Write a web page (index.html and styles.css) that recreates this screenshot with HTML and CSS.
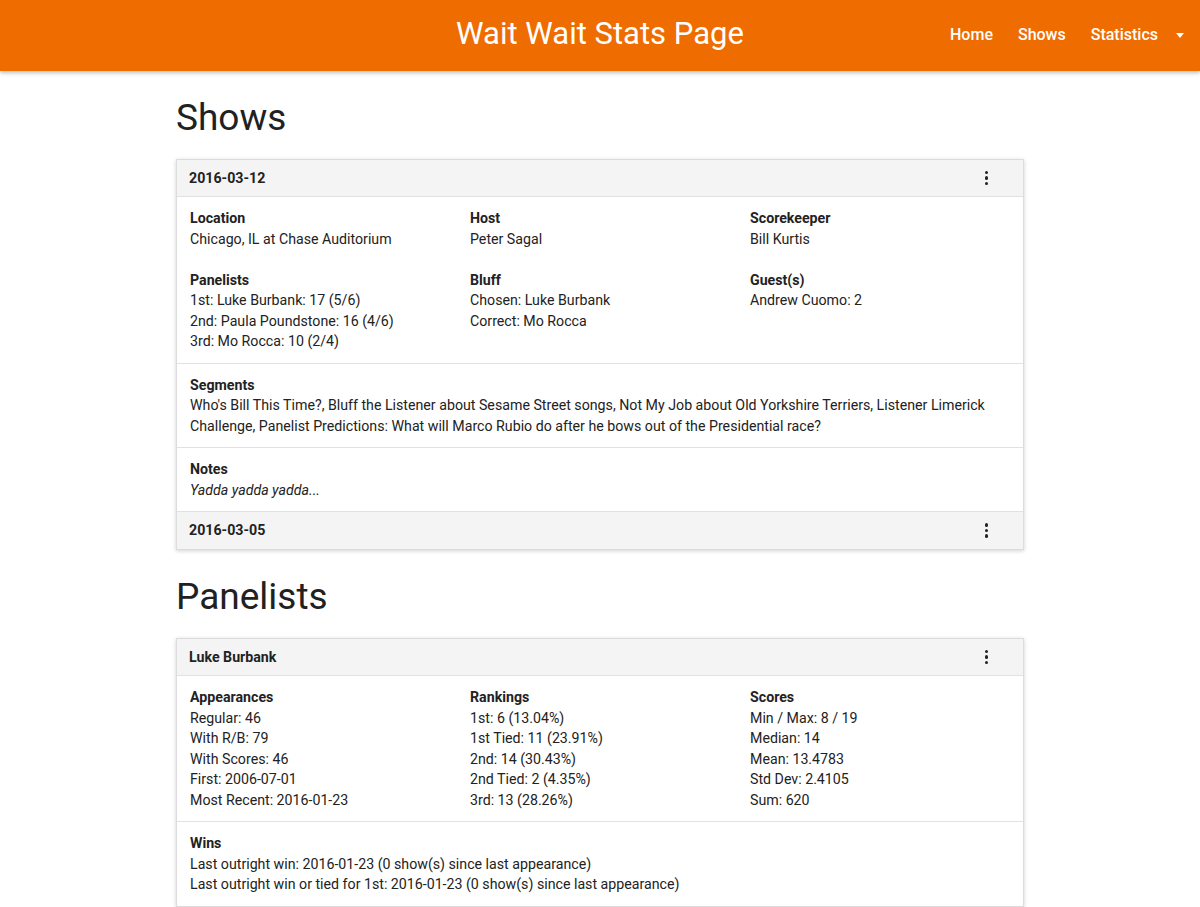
FILE: index.html
```html
<!DOCTYPE html>
<html lang="en">
<head>
<meta charset="utf-8">
<title>Wait Wait Stats Page</title>
<link rel="stylesheet" href="styles.css">
</head>
<body>
<header class="topbar">
  <div class="topbar-spacer"></div>
  <div class="topbar-title">Wait Wait Stats Page</div>
  <nav class="topbar-nav">
    <a class="nav-link" href="#">Home</a>
    <a class="nav-link" href="#">Shows</a>
    <a class="nav-link nav-drop" href="#">Statistics <span class="caret"></span></a>
  </nav>
</header>

<main class="container">
  <h1 class="page-heading">Shows</h1>
  <section class="card">
    <div class="card-head">
      <span class="card-title">2016-03-12</span>
      <span class="kebab"><i></i><i></i><i></i></span>
    </div>
    <div class="card-section grid3">
      <div class="field"><div class="label">Location</div><div>Chicago, IL at Chase Auditorium</div></div>
      <div class="field"><div class="label">Host</div><div>Peter Sagal</div></div>
      <div class="field"><div class="label">Scorekeeper</div><div>Bill Kurtis</div></div>
      <div class="field"><div class="label">Panelists</div><div>1st: Luke Burbank: 17 (5/6)</div><div>2nd: Paula Poundstone: 16 (4/6)</div><div>3rd: Mo Rocca: 10 (2/4)</div></div>
      <div class="field"><div class="label">Bluff</div><div>Chosen: Luke Burbank</div><div>Correct: Mo Rocca</div></div>
      <div class="field"><div class="label">Guest(s)</div><div>Andrew Cuomo: 2</div></div>
    </div>
    <div class="card-section">
      <div class="label">Segments</div>
      <div>Who's Bill This Time?, Bluff the Listener about Sesame Street songs, Not My Job about Old Yorkshire Terriers, Listener Limerick Challenge, Panelist Predictions: What will Marco Rubio do after he bows out of the Presidential race?</div>
    </div>
    <div class="card-section">
      <div class="label">Notes</div>
      <div class="note">Yadda yadda yadda...</div>
    </div>
    <div class="card-head card-head-sep">
      <span class="card-title">2016-03-05</span>
      <span class="kebab"><i></i><i></i><i></i></span>
    </div>
  </section>

  <h1 class="page-heading">Panelists</h1>
  <section class="card">
    <div class="card-head">
      <span class="card-title">Luke Burbank</span>
      <span class="kebab"><i></i><i></i><i></i></span>
    </div>
    <div class="card-section grid3">
      <div class="field"><div class="label">Appearances</div><div>Regular: 46</div><div>With R/B: 79</div><div>With Scores: 46</div><div>First: 2006-07-01</div><div>Most Recent: 2016-01-23</div></div>
      <div class="field"><div class="label">Rankings</div><div>1st: 6 (13.04%)</div><div>1st Tied: 11 (23.91%)</div><div>2nd: 14 (30.43%)</div><div>2nd Tied: 2 (4.35%)</div><div>3rd: 13 (28.26%)</div></div>
      <div class="field"><div class="label">Scores</div><div>Min / Max: 8 / 19</div><div>Median: 14</div><div>Mean: 13.4783</div><div>Std Dev: 2.4105</div><div>Sum: 620</div></div>
    </div>
    <div class="card-section">
      <div class="label">Wins</div>
      <div>Last outright win: 2016-01-23 (0 show(s) since last appearance)</div>
      <div>Last outright win or tied for 1st: 2016-01-23 (0 show(s) since last appearance)</div>
    </div>
  </section>
  <div class="page-end"></div>
</main>
</body>
</html>
```

FILE: styles.css
```css
* { box-sizing: border-box; }
html, body { margin: 0; padding: 0; }
body {
  font-family: Roboto, "Liberation Sans", Arial, sans-serif;
  color: #222;
  background: #fff;
  font-size: 14.2px;
  line-height: 20.5px;
}
.topbar {
  height: 71px;
  background: #ef6c00;
  color: #fff;
  display: grid;
  grid-template-columns: 1fr auto 1fr;
  align-items: center;
  box-shadow: 0 2px 4px rgba(0,0,0,0.25);
  position: relative;
  z-index: 2;
}
.topbar-title {
  font-size: 31px;
  line-height: 36px;
  font-weight: 400;
  padding-bottom: 3px;
}
.topbar-nav {
  display: flex;
  justify-content: flex-end;
  align-items: center;
  gap: 25px;
  padding-right: 16px;
  padding-bottom: 1px;
}
.nav-link {
  color: #fff;
  text-decoration: none;
  font-size: 16px;
  font-weight: 500;
}
.nav-drop { display: flex; align-items: center; gap: 18px; }
.caret {
  width: 0; height: 0;
  border-left: 4.5px solid transparent;
  border-right: 4.5px solid transparent;
  border-top: 5px solid #fff;
}
.container {
  width: 848px;
  margin: 0 auto;
}
.page-heading {
  font-size: 37px;
  font-weight: 400;
  line-height: 44px;
  margin: 25px 0 19px;
  color: #212121;
}
.card {
  border: 1px solid #dcdcdc;
  box-shadow: 0 1px 4px rgba(0,0,0,0.18);
  background: #fff;
}
.card-head {
  height: 37px;
  background: #f4f4f4;
  border-bottom: 1px solid #e2e2e2;
  display: flex;
  align-items: center;
  justify-content: space-between;
  padding: 0 35px 0 12px;
}
.card-head-sep { border-top: 1px solid #e2e2e2; border-bottom: 0; height: 38px; }
.card-title { font-weight: 700; font-size: 14.2px; }
.kebab {
  display: flex;
  flex-direction: column;
  gap: 2px;
}
.kebab i {
  width: 3.5px; height: 3.5px;
  border-radius: 50%;
  background: #222;
}
.card-section {
  padding: 11px 12px 11px 13px;
}
.card-section + .card-section { border-top: 1px solid #e2e2e2; }
.grid3 {
  display: grid;
  grid-template-columns: 280px 280px 1fr;
  row-gap: 20.5px;
}
.label { font-weight: 700; }
.note { font-style: italic; }
.page-end { height: 40px; }
```
